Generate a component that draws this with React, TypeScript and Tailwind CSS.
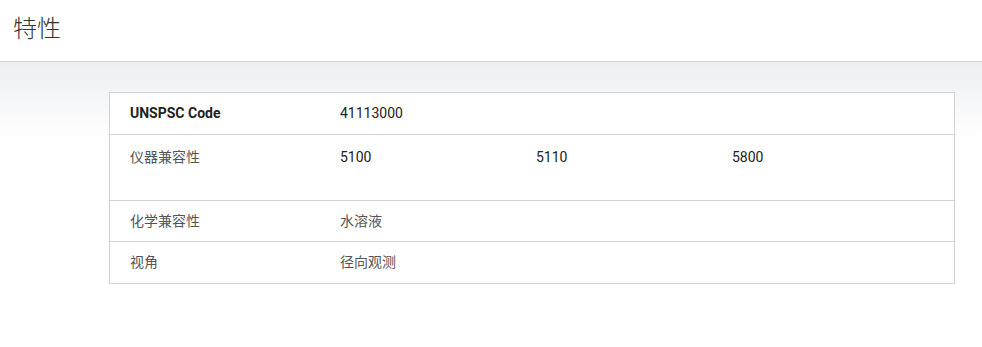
const font = { fontFamily: "Roboto, 'Noto Sans CJK SC', sans-serif" };

type Row = {
  label: string;
  values: string[];
  bold?: boolean;
  tall?: boolean;
};

const rows: Row[] = [
  { label: "UNSPSC Code", values: ["41113000"], bold: true },
  { label: "仪器兼容性", values: ["5100", "5110", "5800"], tall: true },
  { label: "化学兼容性", values: ["水溶液"] },
  { label: "视角", values: ["径向观测"] },
];

// latin values are drawn darker than the CJK ones
const isLatin = (s: string) => /^[\x00-\x7f]+$/.test(s);

export default function App() {
  return (
    <div
      className="w-[982px] h-[347px] bg-white text-[#333] font-['Roboto','Noto_Sans_CJK_SC',sans-serif]"
      style={font}
    >
      <header className="h-[62px] border-b border-[#d4d4d4] bg-white pl-[13px] flex items-center">
        <h2 className="text-[24px] font-light text-[#333] leading-none pb-[4px]">特性</h2>
      </header>
      <section className="bg-gradient-to-b from-[#eceef0] to-white to-[78px] pt-[30px] pl-[109px] pr-[27px]">
        <div className="border border-[#d2d2d2] bg-white">
          {rows.map((row, i) => (
            <div
              key={row.label}
              className={`flex text-[14px] ${i > 0 ? "border-t border-[#d2d2d2]" : ""} ${
                row.tall ? "h-[66px] pt-[12px]" : i === rows.length - 1 ? "h-[42px] items-center" : "h-[41px] items-center"
              }`}
            >
              <div
                className={`w-[230px] pl-[20px] shrink-0 ${
                  row.bold ? "font-bold text-[#222]" : "text-[#555]"
                }`}
              >
                {row.label}
              </div>
              <div className="flex">
                {row.values.map((v) => (
                  <div
                    key={v}
                    className={`w-[196px] ${isLatin(v) ? "text-[#222]" : "text-[#555]"}`}
                  >
                    {v}
                  </div>
                ))}
              </div>
            </div>
          ))}
        </div>
      </section>
    </div>
  );
}
